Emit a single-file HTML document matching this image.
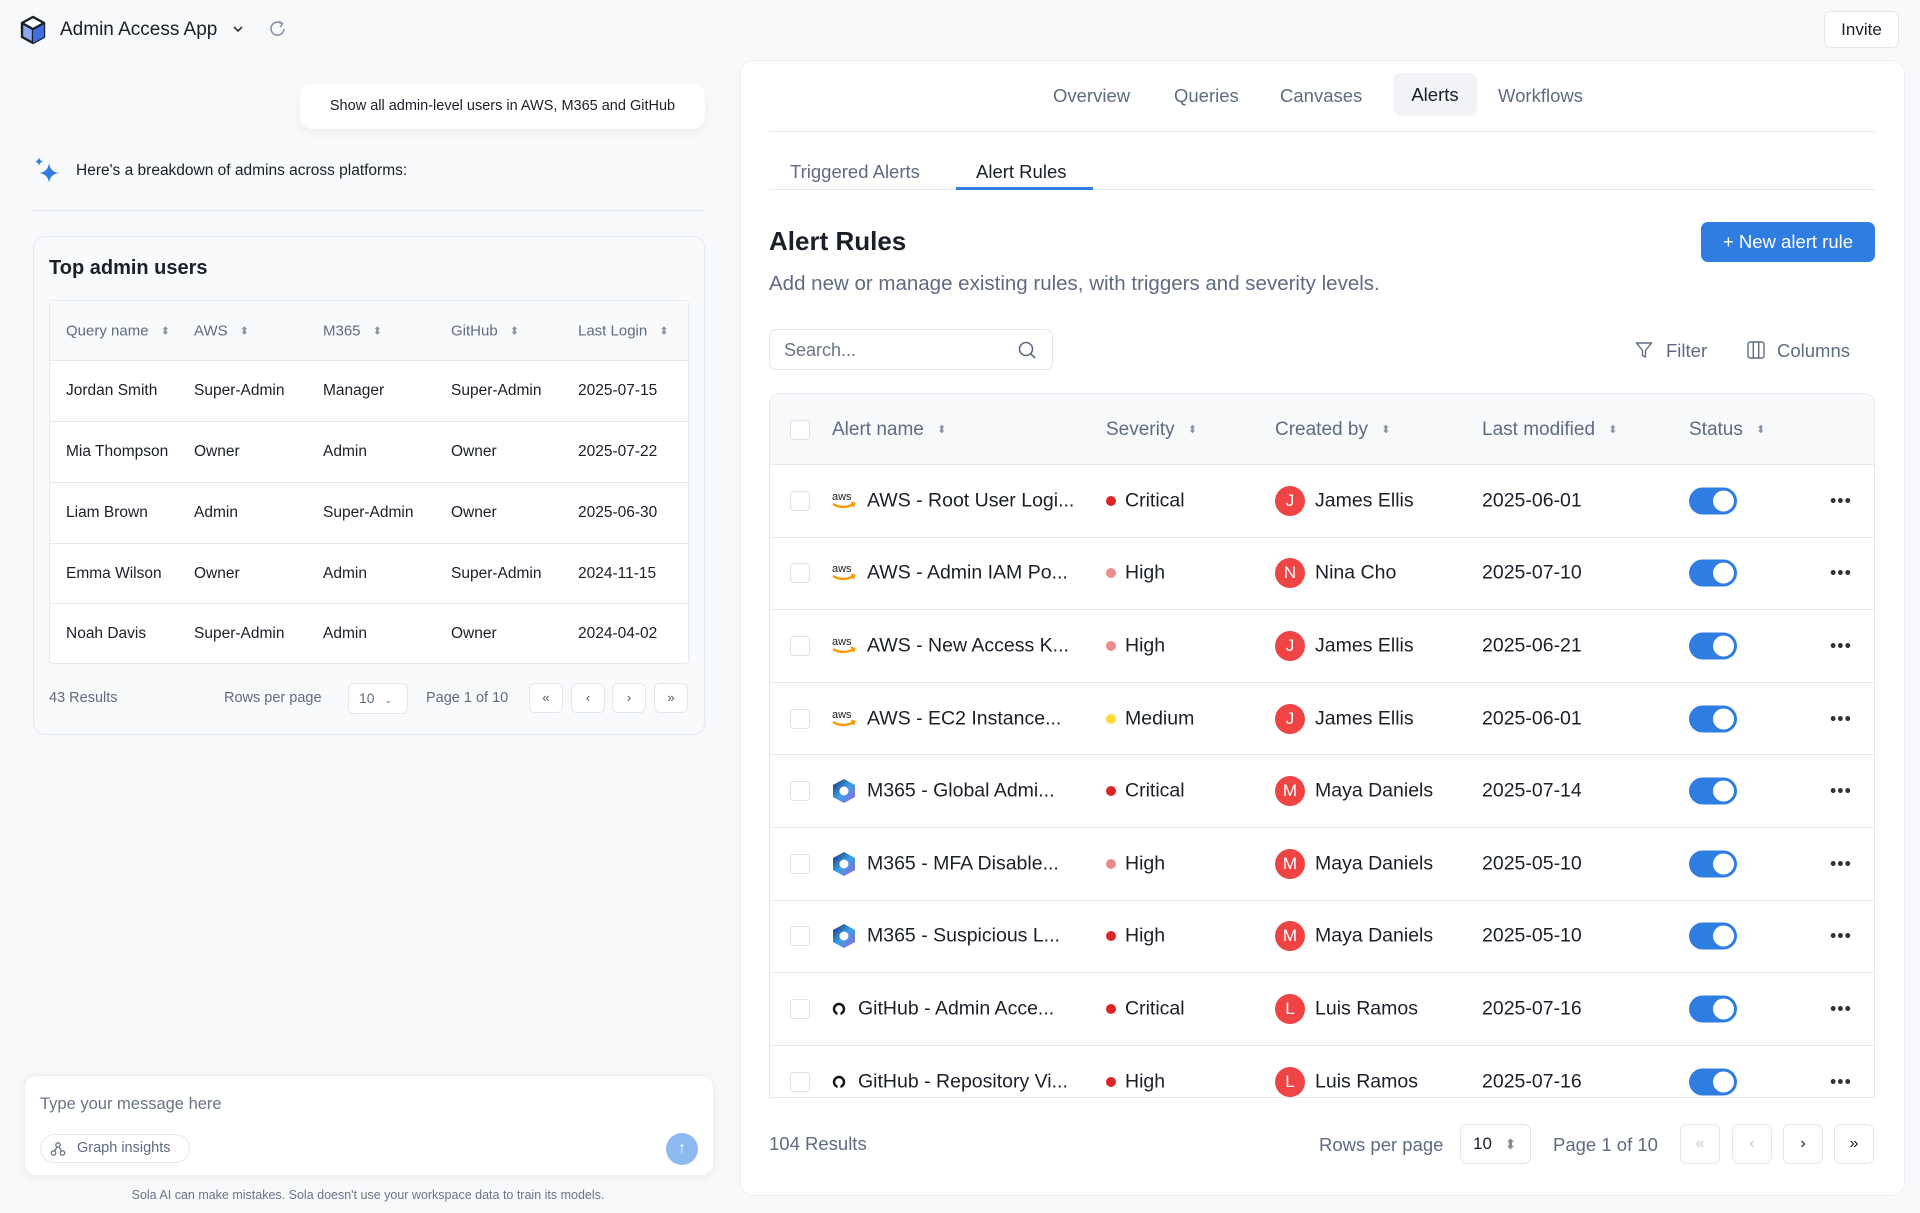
<!DOCTYPE html>
<html><head><meta charset="utf-8"><style>
*{box-sizing:border-box;margin:0;padding:0}
body{width:1920px;height:1213px;background:#f8f9fb;font-family:"Liberation Sans",sans-serif;color:#1b1f2a;position:relative;overflow:hidden}
.a{position:absolute}
.gray{color:#5f6b80}
.sort{display:inline-block;margin-left:8px;vertical-align:middle;color:#8a93a3;font-size:11px}
.lt{left:49px;width:640px;top:300px;height:364px;border:1px solid #e6e9ef;border-radius:4px;background:#fff}
.lrow{position:absolute;left:0;width:100%;border-top:1px solid #e6e9ef;font-size:15.5px}
.lrow span{position:absolute;top:50%;transform:translateY(-50%)}
.pbtn{position:absolute;width:34px;height:30px;border:1px solid #e3e6ec;border-radius:6px;background:#fff;color:#555;font-size:13px;text-align:center;line-height:28px}
.rrow{position:absolute;left:0;width:1106px;height:72.6px;border-top:1px solid #e6e9ef;font-size:19.5px}
.rrow>*{position:absolute;top:50%;transform:translateY(-50%)}
.cb{width:20px;height:20px;border:1.5px solid #dde1e8;border-radius:4px;background:#fff}
.dot{width:10px;height:10px;border-radius:50%}
.av{width:30px;height:30px;border-radius:50%;background:#ef4444;color:#fff;font-size:17px;text-align:center;line-height:30px}
.tg{width:48px;height:27px;border-radius:14px;background:#2f7de1}
.tg:after{content:"";position:absolute;right:3px;top:3px;width:21px;height:21px;border-radius:50%;background:#fff}
.rp{position:absolute;width:40px;height:40px;border:1px solid #e3e6ec;border-radius:7px;background:#fff;text-align:center;line-height:38px;font-size:16px}
</style></head><body>

<svg class="a" style="left:19px;top:15px" width="28" height="30" viewBox="0 0 28 30"><path d="M14 2 L25 8 L25 22 L14 28 L3 22 L3 8 Z" fill="#8fa6ee" stroke="#1b1f2a" stroke-width="2.4" stroke-linejoin="round"/><path d="M3 8 L14 14 L25 8 M14 14 L14 28" fill="none" stroke="#1b1f2a" stroke-width="2.4"/><path d="M14 14 L25 8 L25 22 L14 28Z" fill="#3f6ee0"/><path d="M3 8 L14 2 L25 8 L14 14Z" fill="#fff" stroke="#1b1f2a" stroke-width="2.2" stroke-linejoin="round"/></svg>
<div class="a" style="left:60px;top:19px;font-size:19px;font-weight:500">Admin Access App</div>
<svg class="a" style="left:232px;top:24px" width="12" height="10"><path d="M2 3 L6 7 L10 3" stroke="#333" stroke-width="1.6" fill="none"/></svg>
<svg class="a" style="left:268px;top:19px" width="20" height="20" viewBox="0 0 20 20"><path d="M16 10 A6.5 6.5 0 1 1 13.5 4.5" stroke="#8a93a3" stroke-width="1.6" fill="none"/><path d="M11 2.5 L14.5 4.5 L12.5 8" stroke="#8a93a3" stroke-width="1.6" fill="none"/></svg>
<div class="a" style="left:1824px;top:11px;width:75px;height:37px;border:1px solid #e3e6ec;border-radius:7px;background:#fff;font-size:17px;font-weight:500;text-align:center;line-height:35px">Invite</div>

<div class="a" style="left:300px;top:84px;width:405px;height:45px;background:#fff;border-radius:12px;box-shadow:0 4px 10px rgba(0,0,0,.05);font-size:14.5px;line-height:45px;text-align:center">Show all admin-level users in AWS, M365 and GitHub</div>
<svg class="a" style="left:34px;top:157px" width="28" height="28" viewBox="0 0 28 28"><path d="M15 6 Q16 15 25 16 Q16 17 15 26 Q14 17 5 16 Q14 15 15 6Z" fill="#2f7de1"/><path d="M5 0 Q5.5 4 9 4.5 Q5.5 5 5 9 Q4.5 5 1 4.5 Q4.5 4 5 0Z" fill="#2f7de1"/></svg>
<div class="a" style="left:76px;top:162px;font-size:15.5px">Here's a breakdown of admins across platforms:</div>
<div class="a" style="left:33px;top:210px;width:672px;height:1px;background:#e3e6ec"></div>

<div class="a" style="left:33px;top:236px;width:672px;height:499px;border:1px solid #e6e9ef;border-radius:12px;background:#f9fafc"></div>
<div class="a" style="left:49px;top:257px;font-size:20px;font-weight:600">Top admin users</div>
<div class="a lt">
 <div class="lrow gray" style="top:0;height:59px;border-top:none;font-size:15px;background:#f9fafc">
  <span style="left:16px">Query name <small class="sort">⬍</small></span><span style="left:144px">AWS <small class="sort">⬍</small></span><span style="left:273px">M365 <small class="sort">⬍</small></span><span style="left:401px">GitHub <small class="sort">⬍</small></span><span style="left:528px">Last Login <small class="sort">⬍</small></span>
 </div>
 <div class="lrow" style="top:59px;height:61px"><span style="left:16px">Jordan Smith</span><span style="left:144px">Super-Admin</span><span style="left:273px">Manager</span><span style="left:401px">Super-Admin</span><span style="left:528px">2025-07-15</span></div>
 <div class="lrow" style="top:120px;height:61px"><span style="left:16px">Mia Thompson</span><span style="left:144px">Owner</span><span style="left:273px">Admin</span><span style="left:401px">Owner</span><span style="left:528px">2025-07-22</span></div>
 <div class="lrow" style="top:181px;height:61px"><span style="left:16px">Liam Brown</span><span style="left:144px">Admin</span><span style="left:273px">Super-Admin</span><span style="left:401px">Owner</span><span style="left:528px">2025-06-30</span></div>
 <div class="lrow" style="top:242px;height:60px"><span style="left:16px">Emma Wilson</span><span style="left:144px">Owner</span><span style="left:273px">Admin</span><span style="left:401px">Super-Admin</span><span style="left:528px">2024-11-15</span></div>
 <div class="lrow" style="top:302px;height:61px"><span style="left:16px">Noah Davis</span><span style="left:144px">Super-Admin</span><span style="left:273px">Admin</span><span style="left:401px">Owner</span><span style="left:528px">2024-04-02</span></div>
</div>
<div class="a gray" style="left:49px;top:690px;font-size:14.5px">43 Results</div>
<div class="a gray" style="left:224px;top:690px;font-size:14.5px">Rows per page</div>
<div class="a gray" style="left:348px;top:683px;width:60px;height:31px;border:1px solid #e3e6ec;border-radius:6px;background:#fff;font-size:14px;line-height:29px;padding-left:10px">10 <small style="font-size:9px;margin-left:6px">⌄</small></div>
<div class="a gray" style="left:426px;top:690px;font-size:14.5px">Page 1 of 10</div>
<div class="pbtn" style="left:529px;top:683px">«</div><div class="pbtn" style="left:571px;top:683px">‹</div><div class="pbtn" style="left:612px;top:683px">›</div><div class="pbtn" style="left:654px;top:683px">»</div>

<div class="a" style="left:24px;top:1075px;width:690px;height:101px;background:#fff;border-radius:12px;box-shadow:0 2px 10px rgba(0,0,0,.06);border:1px solid #eef0f3"></div>
<div class="a" style="left:40px;top:1095px;font-size:16.5px;color:#6b7485">Type your message here</div>
<div class="a gray" style="left:40px;top:1134px;width:150px;height:29px;border:1px solid #e6e9ef;border-radius:15px;font-size:14.5px;line-height:27px;padding-left:36px">Graph insights</div>
<svg class="a" style="left:50px;top:1141px" width="16" height="16" viewBox="0 0 16 16"><circle cx="8" cy="4" r="2.2" fill="none" stroke="#6b7485" stroke-width="1.3"/><circle cx="3.5" cy="12" r="2.2" fill="none" stroke="#6b7485" stroke-width="1.3"/><circle cx="12.5" cy="12" r="2.2" fill="none" stroke="#6b7485" stroke-width="1.3"/><path d="M7 6 L4.5 10 M9 6 L11.5 10" stroke="#6b7485" stroke-width="1.3"/></svg>
<div class="a" style="left:666px;top:1133px;width:32px;height:32px;border-radius:50%;background:#8db8f0;color:#fff;text-align:center;line-height:32px;font-size:16px;font-weight:700">↑</div>
<div class="a" style="left:0;width:736px;top:1188px;text-align:center;font-size:12.5px;color:#6b7485">Sola AI can make mistakes. Sola doesn't use your workspace data to train its models.</div>

<div class="a" style="left:740px;top:60px;width:1165px;height:1136px;background:#fff;border:1px solid #eceef2;border-radius:14px"></div>
<div class="a gray" style="left:1053px;top:85px;font-size:18.5px">Overview</div>
<div class="a gray" style="left:1174px;top:85px;font-size:18.5px">Queries</div>
<div class="a gray" style="left:1280px;top:85px;font-size:18.5px">Canvases</div>
<div class="a" style="left:1393px;top:73px;width:84px;height:43px;background:#f1f3f6;border-radius:7px;font-size:18.5px;font-weight:500;text-align:center;line-height:44px">Alerts</div>
<div class="a gray" style="left:1498px;top:85px;font-size:18.5px">Workflows</div>
<div class="a" style="left:769px;top:131px;width:1106px;height:1px;background:#e6e9ef"></div>
<div class="a gray" style="left:790px;top:161px;font-size:18.5px">Triggered Alerts</div>
<div class="a" style="left:976px;top:161px;font-size:18.5px;color:#1b1f2a">Alert Rules</div>
<div class="a" style="left:769px;top:189px;width:1106px;height:1px;background:#e6e9ef"></div>
<div class="a" style="left:956px;top:187px;width:137px;height:3px;background:#2f7de1"></div>
<div class="a" style="left:769px;top:226px;font-size:26px;font-weight:600">Alert Rules</div>
<div class="a gray" style="left:769px;top:272px;font-size:20.5px">Add new or manage existing rules, with triggers and severity levels.</div>
<div class="a" style="left:1701px;top:222px;width:174px;height:40px;background:#2f7de1;border-radius:7px;color:#fff;font-size:18.5px;font-weight:500;text-align:center;line-height:40px">+ New alert rule</div>
<div class="a" style="left:769px;top:329px;width:284px;height:41px;border:1px solid #e3e6ec;border-radius:7px;font-size:18px;color:#6b7485;line-height:40px;padding-left:14px">Search...</div>
<svg class="a" style="left:1017px;top:340px" width="20" height="20" viewBox="0 0 20 20"><circle cx="9" cy="9" r="6.5" fill="none" stroke="#5f6b80" stroke-width="1.6"/><path d="M14 14 L18 18" stroke="#5f6b80" stroke-width="1.6"/></svg>
<svg class="a" style="left:1635px;top:341px" width="18" height="18" viewBox="0 0 18 18"><path d="M1.5 2 H16.5 L10.5 9.5 V16 L7.5 14.5 V9.5 Z" fill="none" stroke="#5f6b80" stroke-width="1.4" stroke-linejoin="round"/></svg>
<div class="a gray" style="left:1666px;top:340px;font-size:18.5px">Filter</div>
<svg class="a" style="left:1747px;top:341px" width="18" height="18" viewBox="0 0 18 18"><rect x="1" y="1" width="16" height="16" rx="2" fill="none" stroke="#5f6b80" stroke-width="1.4"/><path d="M6.3 1 V17 M11.7 1 V17" stroke="#5f6b80" stroke-width="1.4"/></svg>
<div class="a gray" style="left:1777px;top:340px;font-size:18.5px">Columns</div>

<div class="a" style="left:769px;top:393px;width:1106px;height:705px;border:1px solid #e6e9ef;border-bottom:none;border-radius:10px 10px 0 0;overflow:hidden">
 <div class="rrow gray" style="top:0;height:71px;border-top:none;background:#f8f9fb;font-size:19px">
  <div class="cb" style="left:20px"></div><div style="left:62px">Alert name <small class="sort">⬍</small></div><div style="left:336px">Severity <small class="sort">⬍</small></div><div style="left:505px">Created by <small class="sort">⬍</small></div><div style="left:712px">Last modified <small class="sort">⬍</small></div><div style="left:919px">Status <small class="sort">⬍</small></div>
 </div>
</div>
<div class="a" id="rows" style="left:769px;top:464px;width:1106px;height:634px;overflow:hidden;border-left:1px solid #e6e9ef;border-right:1px solid #e6e9ef">
</div>
<div class="a" style="left:769px;top:1097px;width:1106px;height:1px;background:#e6e9ef"></div>

<div class="a gray" style="left:769px;top:1133px;font-size:18.5px">104 Results</div>
<div class="a gray" style="left:1319px;top:1134px;font-size:18.5px">Rows per page</div>
<div class="a" style="left:1460px;top:1124px;width:71px;height:40px;border:1px solid #e3e6ec;border-radius:7px;font-size:17px;line-height:38px;padding-left:12px">10 <small style="color:#888;margin-left:8px">⬍</small></div>
<div class="a gray" style="left:1553px;top:1134px;font-size:18.5px">Page 1 of 10</div>
<div class="rp" style="left:1680px;top:1124px;color:#c3c8d1">«</div>
<div class="rp" style="left:1732px;top:1124px;color:#c3c8d1">‹</div>
<div class="rp" style="left:1783px;top:1124px">›</div>
<div class="rp" style="left:1834px;top:1124px">»</div>

<script>
var aws='<svg width="26" height="24" viewBox="0 0 26 24"><text x="1" y="11" font-family="Liberation Sans" font-size="11" fill="#222">aws</text><path d="M2 15 Q12 21 23 15" stroke="#f90" stroke-width="2.2" fill="none"/><path d="M20 13.5 L23.5 14.5 L22.5 18" stroke="#f90" stroke-width="1.8" fill="none"/></svg>';
var m365='<svg width="26" height="26" viewBox="0 0 26 26"><defs><linearGradient id="g" x1="0" y1="0" x2="1" y2="1"><stop offset="0" stop-color="#1a2b6b"/><stop offset=".5" stop-color="#3aa0e8"/><stop offset="1" stop-color="#9b5fd6"/></linearGradient></defs><path d="M13 1 L24 7 L24 19 L13 25 L2 19 L2 7Z" fill="url(#g)"/><circle cx="13" cy="13" r="4.5" fill="#fff"/></svg>';
var gh='<svg width="14" height="14" viewBox="0 0 14 14"><circle cx="7" cy="7" r="5" fill="none" stroke="#111" stroke-width="2.4"/><rect x="5.5" y="9" width="3" height="5" fill="#fff"/></svg>';
var sev={Critical:'#dc2626',High:'#ec8b8b',Medium:'#fadb38'};
var d=[[aws,'AWS - Root User Logi...','Critical','J','James Ellis','2025-06-01'],[aws,'AWS - Admin IAM Po...','High','N','Nina Cho','2025-07-10'],[aws,'AWS - New Access K...','High','J','James Ellis','2025-06-21'],[aws,'AWS - EC2 Instance...','Medium','J','James Ellis','2025-06-01'],[m365,'M365 - Global Admi...','Critical','M','Maya Daniels','2025-07-14'],[m365,'M365 - MFA Disable...','High','M','Maya Daniels','2025-05-10'],[m365,'M365 - Suspicious L...','High','M','Maya Daniels','2025-05-10'],[gh,'GitHub - Admin Acce...','Critical','L','Luis Ramos','2025-07-16'],[gh,'GitHub - Repository Vi...','High','L','Luis Ramos','2025-07-16']];
var h='';
d.forEach(function(r,i){var g=r[0]==gh;var sc=(i==6||i==8)?'#dc2626':sev[r[2]];
h+='<div class="rrow" style="top:'+(i*72.6)+'px"><div class="cb" style="left:20px"></div><div style="left:'+(g?62:61)+'px;height:26px;display:flex;align-items:center">'+r[0]+'</div><div style="left:'+(g?88:97)+'px">'+r[1]+'</div><div class="dot" style="left:336px;background:'+sc+'"></div><div style="left:355px">'+r[2]+'</div><div class="av" style="left:505px">'+r[3]+'</div><div style="left:545px">'+r[4]+'</div><div style="left:712px">'+r[5]+'</div><div class="tg" style="left:919px"></div><div style="left:1060px;font-size:18px;letter-spacing:1px;color:#333">•••</div></div>';});
document.getElementById('rows').innerHTML=h;
</script>
</body></html>
